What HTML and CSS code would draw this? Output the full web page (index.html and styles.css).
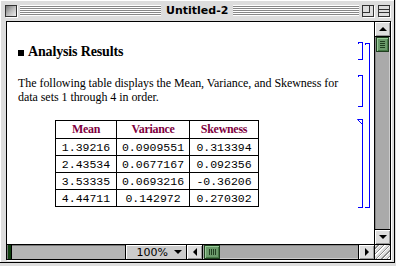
FILE: index.html
```html
<!DOCTYPE html>
<html lang="en">
<head>
    <meta charset="UTF-8">
    <title>Untitled-2</title>
    <link rel="stylesheet" href="styles.css">
</head>
<body>
    <div class="window">
        <div class="titlebar">
            <span class="close-box"></span>
            <span class="stripes stripes-left"></span>
            <span class="title">Untitled-2</span>
            <span class="stripes"></span>
            <span class="zoom-box"></span>
            <span class="collapse-box"></span>
        </div>
        <div class="pane">
            <div class="doc">
                <div class="group">
                    <div class="cells">
                        <div class="cell cell-section">
                            <h2 class="section"><span class="bullet"></span>Analysis Results</h2>
                            <span class="bracket"></span>
                        </div>
                        <div class="cell cell-text">
                            <p class="text">The following table displays the Mean, Variance, and Skewness for<br>data sets 1 through 4 in order.</p>
                            <span class="bracket"></span>
                        </div>
                        <div class="cell cell-output">
                            <table class="results">
                                <thead>
                                    <tr>
                                        <th class="col-mean">Mean</th>
                                        <th class="col-var">Variance</th>
                                        <th class="col-skew">Skewness</th>
                                    </tr>
                                </thead>
                                <tbody>
                                    <tr><td>1.39216</td><td>0.0909551</td><td>0.313394</td></tr>
                                    <tr><td>2.43534</td><td>0.0677167</td><td>0.092356</td></tr>
                                    <tr><td>3.53335</td><td>0.0693216</td><td>-0.36206</td></tr>
                                    <tr><td>4.44711</td><td>0.142972</td><td>0.270302</td></tr>
                                </tbody>
                            </table>
                            <span class="bracket bracket-output">
                                <svg class="bracket-tri" width="6" height="6" viewBox="0 0 6 6">
                                    <polyline points="0.5,0.5 5.5,0.5 5.5,5.5 0.5,0.5" fill="none" stroke="#0000ff" stroke-width="1"/>
                                </svg>
                            </span>
                        </div>
                    </div>
                    <span class="bracket bracket-group"></span>
                </div>
            </div>
            <div class="vscroll">
                <span class="arrow arrow-up"><span class="tri tri-up"></span></span>
                <span class="vtrack"><span class="thumb thumb-v"></span></span>
                <span class="arrow arrow-down"><span class="tri tri-down"></span></span>
            </div>
            <div class="hbar">
                <span class="status"><span class="status-fill"></span></span>
                <span class="magnify">100%<span class="tri tri-menu"></span></span>
                <span class="arrow arrow-left"><span class="tri tri-left"></span></span>
                <span class="htrack"><span class="thumb thumb-h"></span></span>
                <span class="arrow arrow-right"><span class="tri tri-right"></span></span>
            </div>
            <span class="grow-box"></span>
        </div>
    </div>
</body>
</html>
```
FILE: styles.css
```css
body {
    margin: 0;
    background-color: #dddddd;
}
.window {
    width: 395px;
    height: 263px;
    box-sizing: border-box;
    background-color: #dddddd;
    border-right: 1px solid #000;
    border-bottom: 1px solid #000;
    box-shadow: inset 1px 1px 0 #ffffff;
}
.titlebar {
    height: 21px;
    display: flex;
    align-items: center;
    padding: 0 4px 0 5px;
    box-sizing: border-box;
}
.close-box, .zoom-box, .collapse-box {
    width: 12px;
    height: 12px;
    box-sizing: border-box;
    border: 1px solid #333;
    background: linear-gradient(135deg, #777 0%, #bbb 50%, #eee 100%);
    box-shadow: 1px 1px 0 #fff;
}
.zoom-box {
    margin-left: 3px;
    background:
        linear-gradient(#333, #333) 0 6px / 7px 1px no-repeat,
        linear-gradient(#333, #333) 6px 0 / 1px 7px no-repeat,
        #dddddd;
}
.collapse-box {
    margin-left: 4px;
    background:
        linear-gradient(#333, #333) 0 3px / 10px 1px no-repeat,
        linear-gradient(#333, #333) 0 6px / 10px 1px no-repeat,
        #dddddd;
}
.stripes {
    flex: 1;
    height: 11px;
    background: repeating-linear-gradient(#ffffff 0, #ffffff 1px, #888888 1px, #888888 2px);
}
.stripes-left {
    flex: none;
    width: 141px;
    margin-left: 3px;
}
.title {
    padding: 0 5px;
    font-family: "DejaVu Sans", sans-serif;
    font-weight: bold;
    font-size: 11px;
    line-height: 13px;
    color: #000;
}
.pane {
    margin-left: 6px;
    width: 385px;
    height: 239px;
    box-sizing: border-box;
    border: 1px solid #000;
    display: grid;
    grid-template-columns: 367px 16px;
    grid-template-rows: 222px 15px;
    box-shadow: 1px 1px 0 #ffffff;
}
.doc {
    background: #ffffff;
    overflow: hidden;
}
.group {
    display: flex;
    margin-top: 20px;
    padding-right: 4px;
}
.cells {
    width: 356px;
}
.cell {
    display: flex;
}
.cell > :first-child {
    flex: 1;
}
.bracket {
    width: 4px;
    border: 1px solid #0000ff;
    border-left: none;
    position: relative;
}
.bracket::before {
    content: "";
    position: absolute;
    left: 0;
    top: 0;
    width: 1px;
    height: 1px;
    background: #0000ff;
}
.bracket-group {
    margin-left: 2px;
    height: 163px;
    margin-top: 1px;
}
.cell-section {
    height: 18px;
}
.section {
    margin: 0;
    padding: 1px 0 0 11px;
    display: flex;
    align-items: center;
    font-family: "Liberation Serif", serif;
    font-weight: bold;
    font-size: 14px;
    line-height: 16px;
    letter-spacing: -0.15px;
    color: #000;
}
.bullet {
    width: 6px;
    height: 6px;
    background: #000;
    margin: 2px 4px 0 0;
}
.cell-text {
    margin-top: 15px;
    height: 32px;
}
.text {
    margin: 0;
    padding: 1px 0 0 11px;
    font-family: "Liberation Serif", serif;
    font-size: 12px;
    line-height: 14px;
    letter-spacing: -0.05px;
    color: #000;
}
.cell-output {
    margin-top: 12px;
    height: 89px;
}
.results {
    flex: none !important;
    margin: 1px 0 0 48px;
    height: 87px;
    border-collapse: collapse;
    align-self: flex-start;
}
.cell-output::after {
    content: "";
    flex: 1;
}
.results th, .results td {
    border: 1px solid #000;
    padding: 0;
    text-align: center;
}
.results th {
    height: 17px;
    font-family: "Liberation Serif", serif;
    font-size: 12px;
    font-weight: bold;
    color: #800040;
    letter-spacing: -0.3px;
}
.results td {
    height: 16px;
    font-family: "Liberation Mono", monospace;
    font-size: 11.5px;
    color: #000;
}
.col-mean { width: 60px; }
.col-var { width: 72px; }
.col-skew { width: 68px; }
.bracket-output {
    order: 2;
    border-top: none;
}
.bracket-output::before {
    display: none;
}
.bracket-tri {
    position: absolute;
    left: -1px;
    top: 0;
}
.vscroll {
    border-left: 1px solid #000;
    display: flex;
    flex-direction: column;
}
.arrow {
    display: flex;
    align-items: center;
    justify-content: center;
    background: #dddddd;
    box-shadow: inset 1px 1px 0 #fff, inset -1px -1px 0 #999;
}
.arrow-up {
    height: 14px;
    border-bottom: 1px solid #000;
}
.arrow-down {
    height: 14px;
    border-top: 1px solid #000;
}
.vtrack, .htrack {
    flex: 1;
    background: #aaaaaa;
    display: flex;
}
.vtrack {
    flex-direction: column;
    box-shadow: inset 1px 0 0 #888, inset -1px 0 0 #ccc;
}
.htrack {
    box-shadow: inset 0 1px 0 #888, inset 0 -1px 0 #ccc;
}
.thumb {
    box-sizing: border-box;
    border: 1px solid #1f3f1f;
    background-color: #6b9b6b;
}
.thumb-v {
    height: 15px;
    margin: 0 1px;
    background:
        repeating-linear-gradient(#1f3f1f 0, #1f3f1f 1px, transparent 1px, transparent 2px) 3px 3px / 5px 7px no-repeat,
        #6b9b6b;
    box-shadow: inset 1px 1px 0 #9c9, inset -1px -1px 0 #474;
}
.thumb-h {
    width: 16px;
    margin: 0 0 0 1px;
    background:
        repeating-linear-gradient(90deg, #1f3f1f 0, #1f3f1f 1px, transparent 1px, transparent 2px) 4px 3px / 7px 6px no-repeat,
        #6b9b6b;
    box-shadow: inset 1px 1px 0 #9c9, inset -1px -1px 0 #474;
}
.tri {
    width: 0;
    height: 0;
    border: 4px solid transparent;
}
.tri-up {
    border-bottom: 4px solid #000;
    border-top-width: 0;
    margin-top: -1px;
}
.tri-down {
    border-top: 4px solid #000;
    border-bottom-width: 0;
}
.tri-left {
    border-right: 4px solid #000;
    border-left-width: 0;
}
.tri-right {
    border-left: 4px solid #000;
    border-right-width: 0;
}
.tri-menu {
    border-top: 4px solid #000;
    border-bottom-width: 0;
    margin-left: 6px;
}
.hbar {
    border-top: 1px solid #000;
    display: flex;
}
.status {
    width: 118px;
    border-right: 1px solid #000;
    background: #b5b5b5;
    box-shadow: inset 1px 1px 0 #777;
    display: flex;
}
.status-fill {
    width: 3px;
    margin-left: 1px;
    background: #0f3f0f;
    border-right: 1px solid #000;
}
.magnify {
    width: 61px;
    border-right: 1px solid #000;
    background: #cccccc;
    box-shadow: inset 1px 1px 0 #fff;
    display: flex;
    align-items: center;
    justify-content: flex-end;
    padding-right: 4px;
    box-sizing: border-box;
    font-family: "DejaVu Sans", sans-serif;
    font-size: 11px;
    color: #000;
}
.arrow-left {
    width: 15px;
    border-right: 1px solid #000;
}
.arrow-right {
    width: 15px;
    border-left: 1px solid #000;
}
.grow-box {
    border-left: 1px solid #000;
    border-top: 1px solid #000;
    background:
        repeating-linear-gradient(135deg, #dddddd 0, #dddddd 2px, #888 2px, #888 3px, #fff 3px, #fff 4px);
}
```
